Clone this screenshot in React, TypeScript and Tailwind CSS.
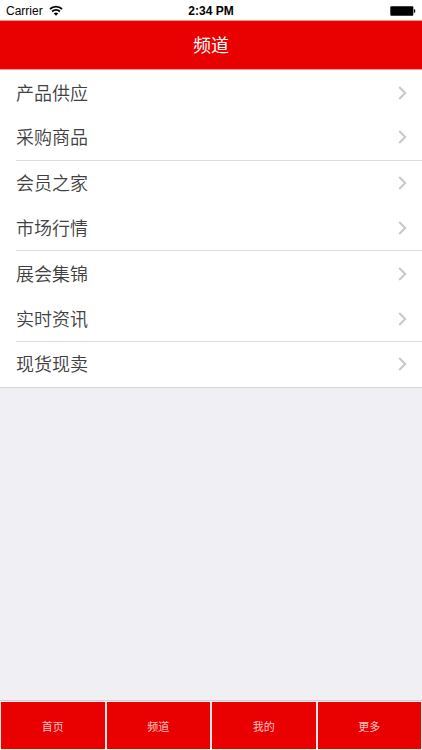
const channels = [
  '产品供应',
  '采购商品',
  '会员之家',
  '市场行情',
  '展会集锦',
  '实时资讯',
  '现货现卖',
];

const tabs = ['首页', '频道', '我的', '更多'];

function WifiIcon() {
  return (
    <svg className="h-3 w-3.5" viewBox="0 0 14 12" fill="none" stroke="#000" strokeWidth="1.8" aria-hidden="true">
      <path d="M1 4A8.8 8.8 0 0 1 13 4" />
      <path d="M3.1 6.5A5.8 5.8 0 0 1 10.9 6.5" />
      <path d="M7 10.7 4.8 8.5A3.1 3.1 0 0 1 9.2 8.5Z" fill="#000" stroke="none" />
    </svg>
  );
}

function BatteryIcon() {
  return (
    <svg className="h-2.5 w-[26px]" viewBox="0 0 26 10" aria-hidden="true">
      <rect x="0.3" y="0.3" width="23" height="9.4" rx="1" fill="#000" />
      <path d="M23.9 3.2h.5a.8.8 0 0 1 .8.8v2a.8.8 0 0 1-.8.8h-.5z" fill="#000" />
    </svg>
  );
}

function Chevron() {
  return (
    <svg className="h-3.5 w-2.5" viewBox="0 0 10 14" fill="none" stroke="#c7c7cc" strokeWidth="2" aria-hidden="true">
      <path d="M1.2 1 7.2 7 1.2 13" />
    </svg>
  );
}

export default function App() {
  return (
    <div className="flex min-h-screen flex-col bg-[#efeff4] font-['Liberation_Sans','Noto_Sans_CJK_SC',sans-serif]">
      <div className="grid h-5 grid-cols-3 items-center bg-white px-1.5 pt-0.5 text-xs text-black">
        <div className="flex items-center gap-1.5">
          <span>Carrier</span>
          <WifiIcon />
        </div>
        <span className="text-center font-bold">2:34 PM</span>
        <div className="flex justify-end">
          <BatteryIcon />
        </div>
      </div>

      <header className="flex h-[50px] items-center justify-center border-y border-[#e59a9a] bg-[#e90000] pt-0.5">
        <h1 className="text-lg text-white">频道</h1>
      </header>

      <ul className="grid min-h-[318px] auto-rows-fr border-b border-[#d4d4d8] bg-white">
        {channels.map((name, i) => (
          <li key={name} className="flex pl-4">
            <button
              type="button"
              className={`flex flex-1 items-center justify-between pr-3.5 text-lg font-[350] text-[#404040] ${
                i % 2 === 1 ? 'border-b border-[#dcdcdc]' : ''
              }`}
            >
              <span className="pt-0.5">{name}</span>
              <Chevron />
            </button>
          </li>
        ))}
      </ul>

      <nav className="mt-auto grid h-[50px] grid-cols-4 gap-0.5 border-t border-[#d9cdd3] bg-[#fbeaea] p-px">
        {tabs.map((tab) => (
          <button key={tab} type="button" className="bg-[#e90000] pt-1 text-[11px] text-[#ffc4c4]">
            {tab}
          </button>
        ))}
      </nav>
    </div>
  );
}
